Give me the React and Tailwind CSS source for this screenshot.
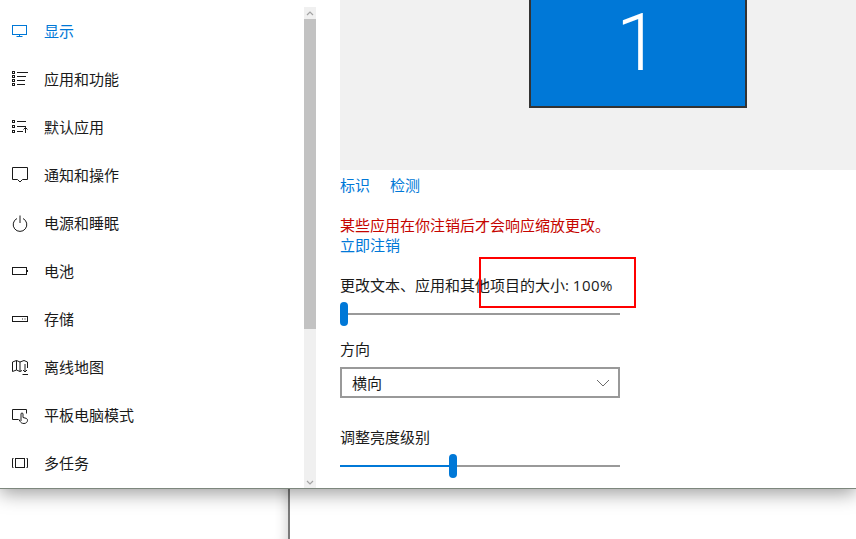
const cjk = { fontFamily: '"Open Sans", "Noto Sans CJK SC", sans-serif' };

const icons = {
  display: (
    <>
      <rect x="1.5" y="3.5" width="14" height="9" />
      <path d="M8.5 12.5v2M5.5 14.5h6" />
    </>
  ),
  apps: (
    <>
      <rect x="1.5" y="1.5" width="2" height="2" />
      <rect x="1.5" y="5.5" width="2" height="2" />
      <rect x="1.5" y="9.5" width="2" height="2" />
      <rect x="1.5" y="13.5" width="2" height="2" />
      <path d="M6 2.5h11M6 6.5h9M6 10.5h8M6 14.5h8" />
    </>
  ),
  defaults: (
    <>
      <rect x="1.5" y="2.5" width="2" height="2" />
      <rect x="1.5" y="7.5" width="2" height="2" />
      <rect x="1.5" y="12.5" width="2" height="2" />
      <path d="M6 3.5h9M6 8.5h9M6 13.5h6M14.5 15V9.5M12.5 11.5l2-2 2 2" />
    </>
  ),
  notify: <path d="M1.5 1.5h15v12h-5L9 16l-2.500-2.500h-5z" />,
  power: <path d="M9 1.500V9M6 4.500a6.800 6.800 0 1 0 6 0" />,
  battery: (
    <>
      <rect x="1.500" y="5.500" width="14" height="7" />
      <path d="M16.500 8v2" />
    </>
  ),
  storage: (
    <>
      <rect x="1.500" y="6.500" width="15" height="5" />
      <path d="M11 9h1M13.500 9h1" />
    </>
  ),
  map: (
    <path d="M1.500 13.500V4l4-1.500L9 4l4-1.500L16.500 4v6M5.500 2.500V12M9 4v9.500M1.500 13.500l4-1.500L9 13.500l2-1M14 6v8M12 12l2 2 2-2M11.500 16.500h5.500" />
  ),
  tablet: (
    <path d="M15.500 7.500v-4h-14v10H7M10 15V8a1 1 0 0 1 2 0v3.500l3 .8c1 .3 1.500 1 1.500 2 0 1.800-1.500 3.200-3.500 3.200s-3-.7-3.800-2L7.500 13" />
  ),
  multitask: (
    <>
      <rect x="4.500" y="4.500" width="9" height="9" />
      <path d="M2.500 4.500h-1v9h1M15.500 4.500h1v9h-1" />
    </>
  ),
};

const navItems = [
  ['display', '显示'],
  ['apps', '应用和功能'],
  ['defaults', '默认应用'],
  ['notify', '通知和操作'],
  ['power', '电源和睡眠'],
  ['battery', '电池'],
  ['storage', '存储'],
  ['map', '离线地图'],
  ['tablet', '平板电脑模式'],
  ['multitask', '多任务'],
];

function NavRow({ icon, label, active }) {
  return (
    <div className={`h-12 flex items-center pl-[11px] gap-[15px] ${active ? 'text-[#0078d7]' : 'text-[#1a1a1a]'}`}>
      <svg width="18" height="18" viewBox="0 0 18 18" fill="none" stroke="currentColor" strokeWidth="1">
        {icons[icon]}
      </svg>
      <span>{label}</span>
    </div>
  );
}

function Slider({ fill, thumbAt }) {
  return (
    <div className="relative w-[280px] h-6 flex items-center">
      <div className="w-full h-[2px] bg-[#999999]">
        <div className="h-full bg-[#0078d7]" style={{ width: fill }} />
      </div>
      <div
        className="absolute top-0 w-2 h-6 rounded-[4px] bg-[#0078d7]"
        style={{ left: thumbAt }}
      />
    </div>
  );
}

export default function App() {
  return (
    <div className="w-[856px] h-[539px] overflow-hidden bg-white flex flex-col text-[15px] leading-[20px]" style={cjk}>
      <div className="relative z-10 h-[489px] shrink-0 flex bg-white border-b border-[#7d877d] shadow-[0_4px_18px_rgba(0,0,0,0.4)]">
        <nav className="w-[304px] shrink-0 pt-[7px]">
          {navItems.map(([icon, label], i) => (
            <NavRow key={icon} icon={icon} label={label} active={i === 0} />
          ))}
        </nav>

        <div className="w-3 shrink-0 mt-[7px] flex flex-col bg-[#f0f0f0]">
          <div className="h-3 flex items-center justify-center">
            <svg width="8" height="5" viewBox="0 0 8 5" fill="none" stroke="#a3a3a3" strokeWidth="1.200">
              <path d="M1 4l3-3 3 3" />
            </svg>
          </div>
          <div className="h-[310px] bg-[#c2c2c2]" />
          <div className="flex-1 flex items-end justify-center pb-[3px]">
            <svg width="8" height="5" viewBox="0 0 8 5" fill="none" stroke="#a3a3a3" strokeWidth="1.200">
              <path d="M1 1l3 3 3-3" />
            </svg>
          </div>
        </div>

        <main className="flex-1 min-w-0 pl-6">
          <div className="h-[170px] bg-[#f1f1f1] pl-[189px]">
            <div className="w-[218px] h-[108px] bg-[#0078d7] border-2 border-t-0 border-[#333333] flex justify-center items-start">
              <span
                className="mt-[3px] text-white text-[79px] leading-[80px] font-light"
                style={{ fontFamily: 'Roboto, sans-serif' }}
              >
                1
              </span>
            </div>
          </div>

          <div className="mt-[5px] flex gap-5 text-[#0078d7]">
            <span>标识</span>
            <span>检测</span>
          </div>

          <p className="mt-5 text-[#c50500]">某些应用在你注销后才会响应缩放更改。</p>
          <p className="text-[#0078d7]">立即注销</p>

          <p className="mt-5 text-[#1a1a1a]">
            更改文本、应用和其他项目的大小: <span className="tracking-[0.5px]">100%</span>
          </p>
          <div className="mt-[7px]">
            <Slider fill="0px" thumbAt="0px" />
          </div>

          <p className="mt-[13px] mb-2 text-[#1a1a1a]">方向</p>
          <div className="w-[280px] h-[31px] border-2 border-[#999999] flex items-center justify-between pl-[10px] pr-2 text-[#1a1a1a]">
            <span>横向</span>
            <svg width="14" height="8" viewBox="0 0 14 8" fill="none" stroke="#6b6b6b" strokeWidth="1">
              <path d="M1 1l6 6 6-6" />
            </svg>
          </div>

          <p className="mt-[29px] text-[#1a1a1a]">调整亮度级别</p>
          <div className="mt-[7px]">
            <Slider fill="110px" thumbAt="109px" />
          </div>
        </main>

        <div className="absolute left-[479px] top-[257px] w-[157px] h-[51px] border-2 border-[#ff0000]" />
      </div>

      <div className="flex-1 w-[290px] border-r-2 border-[#7a7a7a] shadow-[inset_-12px_0_12px_-10px_rgba(0,0,0,0.18)]" />
    </div>
  );
}
